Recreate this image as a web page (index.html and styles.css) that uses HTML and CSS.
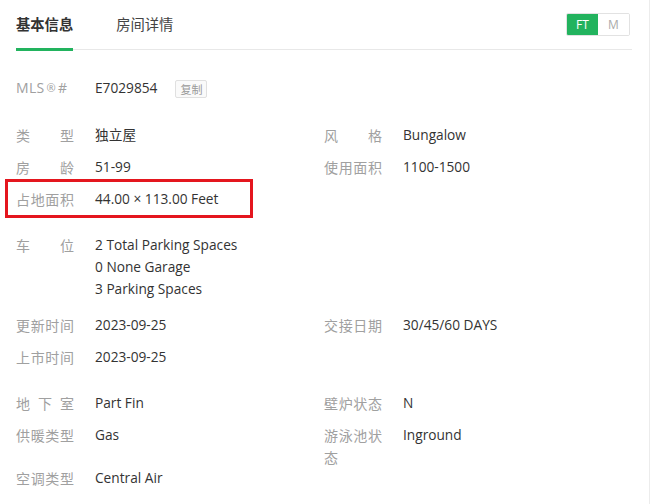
FILE: index.html
```html
<!DOCTYPE html>
<html lang="zh">
<head>
<meta charset="utf-8">
<link rel="stylesheet" href="styles.css">
</head>
<body>
<div class="card">
  <div class="tabs">
    <div class="tab active">基本信息</div>
    <div class="tab">房间详情</div>
    <div class="unit-toggle">
      <span class="unit on">FT</span><span class="unit">M</span>
    </div>
  </div>

  <div class="section">
    <div class="item">
      <span class="label plain">MLS<span class="reg">®</span>#</span>
      <span class="value">E7029854</span>
      <span class="copy-btn">复制</span>
    </div>
  </div>

  <div class="section grid">
    <div class="item"><span class="label">类型</span><span class="value">独立屋</span></div>
    <div class="item"><span class="label">风格</span><span class="value">Bungalow</span></div>
    <div class="item"><span class="label">房龄</span><span class="value">51-99</span></div>
    <div class="item"><span class="label">使用面积</span><span class="value">1100-1500</span></div>
    <div class="item highlighted"><span class="label">占地面积</span><span class="value">44.00 × 113.00 Feet</span><span class="mark"></span></div>
    <div class="item"></div>
  </div>

  <div class="section grid">
    <div class="item multi"><span class="label">车位</span><span class="value">2 Total Parking Spaces<br>0 None Garage<br>3 Parking Spaces</span></div>
    <div class="item"></div>
    <div class="item"><span class="label">更新时间</span><span class="value">2023-09-25</span></div>
    <div class="item"><span class="label">交接日期</span><span class="value">30/45/60 DAYS</span></div>
    <div class="item"><span class="label">上市时间</span><span class="value">2023-09-25</span></div>
    <div class="item"></div>
  </div>

  <div class="section grid">
    <div class="item"><span class="label">地下室</span><span class="value">Part Fin</span></div>
    <div class="item"><span class="label">壁炉状态</span><span class="value">N</span></div>
    <div class="item"><span class="label">供暖类型</span><span class="value">Gas</span></div>
    <div class="item"><span class="label wrap">游泳池状态</span><span class="value">Inground</span></div>
    <div class="item"><span class="label">空调类型</span><span class="value">Central Air</span></div>
    <div class="item"></div>
  </div>
</div>
</body>
</html>
```

FILE: styles.css
```css
* { box-sizing: border-box; }

html, body {
  margin: 0;
  padding: 0;
  background: #ffffff;
}

body {
  font-family: "Open Sans", "Noto Sans CJK SC", sans-serif;
  font-size: 14px;
  color: #333333;
}

.card {
  width: 650px;
  height: 504px;
  padding: 0 17px 0 16px;
  border-right: 1px solid #ececec;
  overflow: hidden;
}

.tabs {
  display: flex;
  align-items: flex-start;
  height: 50px;
  border-bottom: 1px solid #e8e8e8;
}

.tab {
  height: 51px;
  line-height: 48px;
  margin-bottom: -2px;
  margin-right: 43px;
  font-family: "Noto Sans CJK SC", sans-serif;
  font-size: 14.3px;
  color: #444444;
  border-bottom: 3px solid transparent;
}

.tab.active {
  font-weight: 700;
  color: #333333;
  border-bottom-color: #22b35e;
}

.unit-toggle {
  display: flex;
  margin-left: auto;
  margin-top: 13px;
  margin-right: 2px;
  border: 1px solid #e2e2e2;
  border-radius: 2px;
  overflow: hidden;
}

.unit {
  width: 31px;
  height: 21px;
  line-height: 21px;
  text-align: center;
  font-size: 12px;
  color: #aaaaaa;
  background: #ffffff;
}

.unit.on {
  width: 31px;
  color: #ffffff;
  background: #22b35e;
}

.section {
  margin-top: 14px;
}

.tabs + .section {
  margin-top: 22px;
}

.tabs + .section + .section {
  margin-top: 15px;
}

.grid {
  display: grid;
  grid-template-columns: 308px 308px;
}

.item {
  position: relative;
  display: flex;
  align-items: flex-start;
  padding: 5px 0;
  min-height: 32px;
  line-height: 22px;
}

.item.multi {
  padding-bottom: 9px;
}

.label {
  flex: none;
  width: 58px;
  margin-right: 21px;
  font-family: "Noto Sans CJK SC", sans-serif;
  font-size: 14px;
  color: #a0a0a0;
  text-align: justify;
  text-align-last: justify;
}

.label.plain {
  font-family: "Open Sans", "Noto Sans CJK SC", sans-serif;
  text-align: left;
  text-align-last: left;
  letter-spacing: 0.3px;
}

.label .reg {
  font-size: 11px;
  margin: 0 2px;
  vertical-align: 1px;
}

.label.wrap {
  margin-bottom: -11px;
}

.value {
  color: #333333;
  font-size: 13.7px;
}

.copy-btn {
  margin-left: 18px;
  margin-top: 3px;
  height: 18px;
  line-height: 16px;
  padding: 0 4px;
  font-family: "Noto Sans CJK SC", sans-serif;
  font-size: 11px;
  color: #999999;
  border: 1px solid #e0e0e0;
  border-radius: 2px;
  background: #fafafa;
}

.mark {
  position: absolute;
  left: -11px;
  top: -4px;
  width: 248px;
  height: 39px;
  border: 3px solid #e4161e;
}
```
